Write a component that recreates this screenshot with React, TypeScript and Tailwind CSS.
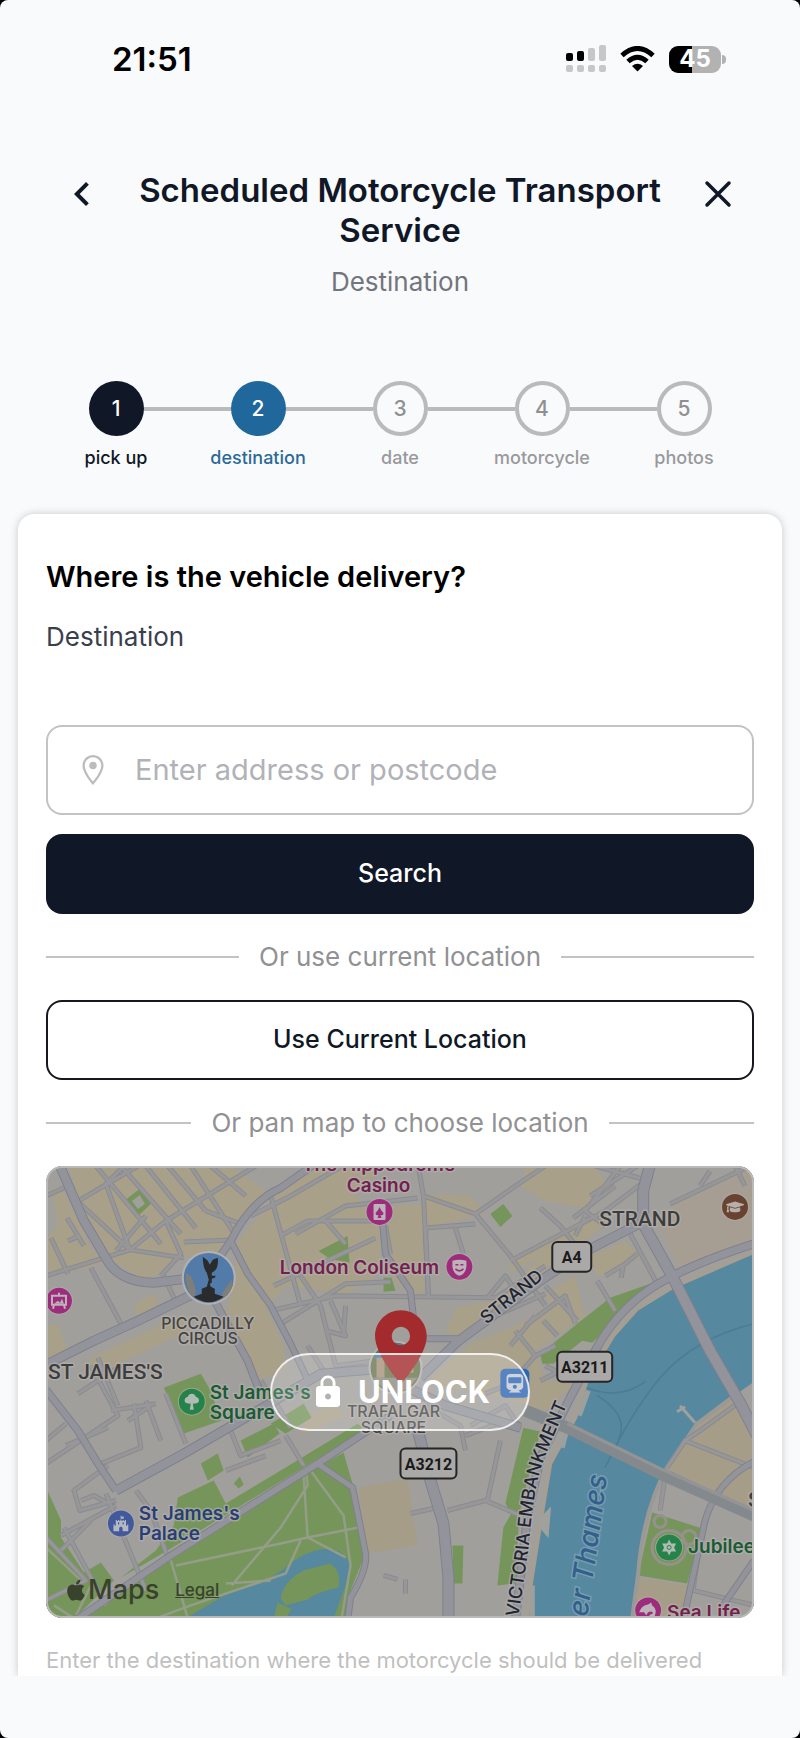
import { useState } from 'react';
import { FaApple, FaFortAwesome, FaGraduationCap, FaTrain } from 'react-icons/fa';

const steps = [
    { label: 'pick up', state: 'done' },
    { label: 'destination', state: 'current' },
    { label: 'date', state: 'todo' },
    { label: 'motorcycle', state: 'todo' },
    { label: 'photos', state: 'todo' },
];

const circleStyles: Record<string, string> = {
    done: 'bg-[#101726] text-white',
    current: 'bg-[#20689b] text-white',
    todo: 'border-4 border-[#bababb] text-[#8f9092]',
};

const labelStyles: Record<string, string> = {
    done: 'text-[#101726]',
    current: 'text-[#2b6a98]',
    todo: 'text-[#98999b]',
};

// Map geometry, in the units of the 709x453 view box
const beigeBlocks = [
    'M22 0L185 0L225 28L190 68L176 92L140 90L100 115L62 92L40 55Z',
    'M5 20L18 25L45 82L60 97L0 112L0 72L12 60Z',
    'M190 78L235 24L270 0L340 0L310 28L335 60L335 108L300 128L240 120L215 150L180 150L190 110Z',
    'M345 40L378 38L378 132L350 118L340 90Z',
    'M378 28L425 30L440 48L380 62Z',
    'M92 155L88 140L105 128L112 134L104 152Z',
    'M45 192L138 148L142 165L58 205L40 205Z',
    'M0 160L12 158L24 190L0 205Z',
    'M185 155L222 145L238 180L240 205L210 215Z',
    'M410 142L450 135L470 118L495 90L465 108L465 95L550 45L565 55L470 128L450 150L412 172L400 165Z',
    'M385 212L425 178L470 160L505 140L532 130L540 150L490 185L500 215L530 218L500 245L430 225L395 222Z',
    'M480 0L550 0L565 22L540 42L500 35L475 20Z',
    'M545 90L580 75L595 90L560 110L550 108Z',
    'M500 128L530 110L538 145L512 160Z',
    'M255 270L300 250L290 236L262 250Z',
];

const tanBlocks = [
    'M313 322L362 313L372 380L322 388Z',
    'M622 302L655 258L692 228L709 262L709 350L640 322Z',
    'M593 412L642 420L638 453L587 453Z',
];

const greenBlocks = [
    'M78 35L95 22L105 38L92 50Z',
    'M273 85L302 70L304 97L284 93Z',
    'M338 112L346 112L350 125L338 126Z',
    'M445 48L458 38L467 50L455 61Z',
    'M495 188L532 158L565 132L605 118L609 121L575 150L547 177L537 175L508 198L497 198Z',
    'M612 116L621 110L622 114L612 118Z',
    'M118 222L155 208L165 225L175 255L138 268Z',
    'M195 275L228 258L234 268L202 292Z',
    'M155 298L172 288L178 305L162 315Z',
    'M132 332L168 315L180 338L235 305L312 258L320 264L120 386L75 412L110 385L128 360Z',
    'M225 258L258 238L266 252L240 268Z',
    'M28 453L122 396L272 302L298 287L308 322L316 365L320 388L302 432L300 453Z',
    'M0 322L15 355L15 372L38 407L55 397L68 415L28 453L0 453Z',
    'M407 380L418 380L417 418L408 418Z',
    'M478 262L495 266L474 348L470 418L452 420L458 362L466 348L460 338Z',
    'M607 347L657 363L642 418L593 410Z',
];

const streets = [
    'M0 30L18 22M34 34L92 0M50 0L115 78M75 0L135 68M100 0L150 62M122 0L160 45M145 0L190 70M165 0L200 30',
    'M26 30L84 84L138 92M84 84L120 55L210 0M120 55L135 88L115 110M78 0L60 18L84 84L0 110M138 76L184 74',
    'M21 52L38 80M5 72L22 108M45 102L75 158M22 75L34 70M160 45L195 58M118 110L128 132M100 50L70 85',
    'M205 50L245 30L300 -2M225 30L255 140M250 68L300 40L372 32M280 55L300 78M235 70L262 55L330 55M228 120L330 72',
    'M372 -4L378 30L383 132M378 30L430 48L465 90L500 140M430 48L470 20L500 0M380 62L430 58M410 62L418 88',
    'M225 145L290 130L450 132L500 100M235 158L300 118L345 116M285 135L300 170L280 165M255 110L275 140L290 200L330 195',
    'M262 180L278 205M300 140L298 168M442 132L460 110L470 125M380 62L383 132M340 60L345 88M450 150L500 128',
    'M465 95L560 45L600 15M550 0L605 15M575 0L540 45L560 60M495 42L515 60L545 98M528 52L570 20M530 70L540 50',
    'M582 62L612 118M560 110L580 98L592 88M576 112L578 100M500 120L532 155M552 115L570 145M470 165L490 190L510 180',
    'M545 30L600 -5M625 38L709 -2M655 20L665 5M690 0L700 20M480 160L520 130L530 158M465 180L490 150M498 155L512 170',
    'M490 190L465 218M500 200L530 215M495 215L515 205M440 228L480 212M425 260L460 240L475 262M380 240L415 260L420 285',
    'M20 258L0 275M32 228L75 200M45 200L72 250L0 298M20 280L62 262M65 245L110 238M100 235L115 275M82 255L105 240',
    'M52 192L72 240M88 238L95 282L50 300M120 228L140 278M185 265L195 290L235 275M62 300L28 325L34 345L70 335',
    'M60 328L100 425M15 370L70 340M90 325L105 345L122 392M45 355L15 385M35 335L48 330L62 338M180 305L220 290',
    'M18 362L60 440M0 372L40 415L0 435M420 270L460 255L475 265M455 275L442 335M402 345L440 335L475 350M365 348L392 342',
    'M375 275L372 258M240 270L258 300M215 215L235 245L245 262M338 410L352 414M360 414L360 428',
    'M622 302L640 275L709 302M640 275L655 265L692 238M625 308L700 345M657 363L648 425L709 440M615 345L620 310',
];

const parkPaths =
    'M125 395L142 453M130 400L235 378L262 372L313 362M186 420L235 362L262 320L260 300M262 372L258 310M265 305L298 350L305 400L296 453M262 372L300 392M0 382L35 415M110 453L145 440L240 408L255 375M180 418L225 415M30 450L45 420M8 440L28 453';

const roads = [
    { d: 'M14 0L38 55L60 92Q72 116 108 117L140 113', width: 9 },
    { d: 'M0 199L48 175L92 155L150 127', width: 9 },
    { d: 'M168 100L185 75Q205 35 235 22L272 -4', width: 7 },
    { d: 'M185 75L202 108L225 140L245 178L262 214', width: 6 },
    { d: 'M167 132L202 195L214 226', width: 7 },
    { d: 'M0 224L32 265L52 298L70 325', width: 7 },
    { d: 'M70 325L138 288L200 252L275 208L325 204L400 240L475 262', width: 9 },
    { d: 'M28 456L122 392L272 298L345 250', width: 7 },
    { d: 'M272 298L307 322L313 352L320 388Q322 404 305 432L302 456', width: 6 },
    { d: 'M370 255L385 315L398 358L403 412L403 456', width: 11 },
    { d: 'M337 56L340 88L365 125L370 170', width: 6 },
    { d: 'M375 212L412 176L495 115L535 88L600 55', width: 9 },
    { d: 'M378 173L414 173', width: 6 },
    { d: 'M709 78Q640 100 605 123Q570 147 550 185L526 230L495 292L482 352L470 456', width: 8 },
    { d: 'M709 296Q672 315 660 355Q650 400 638 456', width: 6 },
    { d: 'M709 395L678 440', width: 6 },
    { d: 'M605 -2L598 25L598 58L628 112L665 185L695 237L712 270', width: 11 },
];

const halo = 'stroke-[#b3b0ac]/70 stroke-[3px] [paint-order:stroke] [stroke-linejoin:round]';

function Shield({ x, y, width, children }: { x: number; y: number; width: number; children: string }) {
    return (
        <g>
            <rect x={x} y={y} width={width} height={30} rx={5} fill="#aaa9a8" stroke="#252525" strokeWidth={2} />
            <text x={x + width / 2} y={y + 21} textAnchor="middle" className="font-['Roboto',sans-serif] text-[16px] font-bold fill-[#1b1b1b]">
                {children}
            </text>
        </g>
    );
}

function Poi({ x, y, fill, children }: { x: number; y: number; fill: string; children: React.ReactNode }) {
    return (
        <g transform={`translate(${x} ${y})`}>
            <circle r={14} fill="#b5b1ae" opacity={0.6} />
            <circle r={13} fill={fill} />
            {children}
        </g>
    );
}

function LondonMap() {
    return (
        <svg viewBox="0 0 709 453" className="block w-full font-['Inter',sans-serif]" role="img" aria-label="Map of Trafalgar Square, London">
            <rect width="709" height="453" fill="#a09f9c" />
            <path d="M612 55L630 38L709 0L709 72L636 108Z" fill="#a69e92" />
            {beigeBlocks.map(d => <path key={d} d={d} fill="#a9a08a" />)}
            {tanBlocks.map(d => <path key={d} d={d} fill="#a69d89" />)}
            {greenBlocks.map(d => <path key={d} d={d} fill="#76955a" />)}
            <path d="M86 35L94 29L99 38L92 43Z" fill="#a09f9c" />
            <path d="M188 318L194 311L198 319L193 323Z" fill="#76955a" />

            {/* St James's Park lake */}
            <path d="M140 453L182 428Q222 418 245 398Q262 384 285 383Q303 387 304 402L300 420L288 453Z" fill="#5688a0" />
            <path d="M235 433Q238 415 258 405L284 398Q296 404 293 422Q270 427 262 434L240 440ZM232 437L246 444L240 453L228 453Z" fill="#76955a" />

            {/* River Thames */}
            <path d="M709 86L665 105L628 121L592 143L568 170L542 213L530 252L505 298L495 358L485 422L482 453L587 453L593 408Q598 345 622 302L652 258L692 228L709 216Z" fill="#5688a0" />
            <path d="M709 86L665 105L628 121L592 143L568 170L542 213L530 252L505 298L495 358L485 422L482 453" fill="none" stroke="#a69e92" strokeWidth="4" />
            <path d="M587 453L593 408Q598 345 622 302L652 258L692 228" fill="none" stroke="#9a9995" strokeWidth="4" />
            <path d="M709 158Q650 172 615 212Q585 248 560 302M542 222Q575 235 600 216M552 230Q585 250 573 275" fill="none" stroke="#4c7c94" strokeWidth="1.5" />
            <path d="M543 225L534 250M522 262L517 282M487 420L487 453" stroke="#9ba09f" strokeWidth="5" />
            <path d="M492 357L504 345L502 369ZM635 240L650 257M632 246L640 241" fill="#a0a09d" stroke="#a0a09d" strokeWidth="3" />

            {streets.map(d => <path key={d} d={d} fill="none" stroke="#8a8b8f" strokeWidth="5" strokeLinejoin="round" />)}
            {streets.map(d => <path key={d} d={d} fill="none" stroke="#97979a" strokeWidth="3" strokeLinejoin="round" />)}
            <path d={parkPaths} fill="none" stroke="#939d87" strokeWidth="2.5" />
            {roads.map(r => <path key={r.d} d={r.d} fill="none" stroke="#7f818b" strokeWidth={r.width + 1} strokeLinejoin="round" />)}
            {roads.map(r => <path key={r.d} d={r.d} fill="none" stroke="#93949b" strokeWidth={r.width - 1} strokeLinejoin="round" />)}
            <path d="M480 245L522 262L615 308L709 350" fill="none" stroke="#83898c" strokeWidth="12" />
            <path d="M522 258L615 303L709 345" fill="none" stroke="#929496" strokeWidth="3" />
            <g fill="none" stroke="#96918f" strokeWidth="3">
                <circle cx="624" cy="382" r="17" />
                <circle cx="615" cy="356" r="6" />
                <circle cx="644" cy="372" r="7" />
            </g>

            {/* Piccadilly Circus photo */}
            <circle cx="163" cy="112" r="27" fill="#b3b2b3" />
            <circle cx="163" cy="112" r="25" fill="#537ba9" />
            <path d="M140 108Q146 106 150 126L148 132Q140 126 140 108ZM178 125L186 114L187 120Q183 132 174 134Z" fill="#807e78" />
            <path d="M157 91L162 95L164 99L167 94L172 92Q173 101 169 105L166 107L166 110L170 110L169 112L166 113L166 117L164 118L165 121L169 123L169 128L178 131Q163 142 148 131L156 128L156 123L161 121L163 114L161 107Q157 102 157 91Z" fill="#292b2d" />

            {/* Trafalgar Square photo */}
            <circle cx="350" cy="202" r="27" fill="#b3b2b3" />
            <circle cx="350" cy="202" r="25" fill="#68764e" />
            <path d="M328 192Q350 162 372 192L364 197L338 197Z" fill="#447ead" />
            <path d="M331 192h8v20h-8zM362 197h6v10h-6z" fill="#a59078" />
            <path d="M328 212H372Q350 242 328 212Z" fill="#8d8b80" />

            <Poi x={334} y={46} fill="#9d2d7c">
                <rect x="-6" y="-8" width="12" height="16" rx="1" fill="#bdb4ba" />
                <path d="M0 -5Q1 -2 4 1Q4 4 1 3L2 6H-2L-1 3Q-4 4 -4 1Q-1 -2 0 -5Z" fill="#9d2d7c" />
            </Poi>
            <Poi x={414} y={101} fill="#9d2d7c">
                <path d="M-7 -6Q0 -8 7 -6V0Q6 7 0 9Q-6 7 -7 0Z" fill="#bdb4ba" />
                <path d="M-4 -2h3M1 -2h3M-4 2Q0 6 4 2" fill="none" stroke="#9d2d7c" strokeWidth="1.5" />
            </Poi>
            <Poi x={13} y={135} fill="#9d2d7c">
                <path d="M-7 -5H7V4H-7ZM-5 4L-6 8M5 4L6 8M0 -8V-5" fill="none" stroke="#bdb4ba" strokeWidth="2" />
                <path d="M-5 3L-1 0L1 2L3 -2L5 3Z" fill="#bdb4ba" />
            </Poi>
            <Poi x={690} y={41} fill="#694331"><FaGraduationCap x={-9} y={-9} size={18} color="#b7b0aa" /></Poi>
            <Poi x={146} y={236} fill="#24824a">
                <path d="M-7 0Q-8 -4 -4 -5Q-3 -8 0 -8Q3 -8 4 -5Q8 -4 7 0Q6 2 1 2L2 8H-2L-1 2Q-6 2 -7 0Z" fill="#b0bbb2" />
            </Poi>
            <Poi x={75} y={358} fill="#43599e"><FaFortAwesome x={-8} y={-8} size={16} color="#b4b8c0" /></Poi>
            <Poi x={624} y={382} fill="#24824a">
                <path d="M0 -8L2 -4L7 -4L5 0L7 4L2 4L0 8L-2 4L-7 4L-5 0L-7 -4L-2 -4Z" fill="#b0bbb2" />
                <circle r="2" fill="none" stroke="#24824a" />
            </Poi>
            <Poi x={603} y={445} fill="#9d2d7c">
                <path d="M-9 2Q-7 -5 0 -6L3 -8L4 -5Q10 -1 6 7L4 9L1 5L5 3Q4 0 0 2L-2 5L-4 2Z" fill="#bdb4ba" />
            </Poi>
            <rect x="455" y="203" width="29" height="29" rx="5" fill="#2f65b3" />
            <FaTrain x={460} y={208} size={19} color="#c2cad4" />

            <g className={`text-[19px] font-semibold fill-[#74204f] ${halo}`}>
                <text x="333" y="5" textAnchor="middle">The Hippodrome</text>
                <text x="333" y="26" textAnchor="middle">Casino</text>
                <text x="234" y="108">London Coliseum</text>
                <text x="622" y="454">Sea Life</text>
            </g>
            <g className={`text-[19px] font-semibold fill-[#195b35] ${halo}`}>
                <text x="164" y="233">St James's</text>
                <text x="164" y="253">Square</text>
                <text x="643" y="388">Jubilee</text>
            </g>
            <g className={`text-[19px] font-semibold fill-[#293d77] ${halo}`}>
                <text x="93" y="355">St James's</text>
                <text x="93" y="375">Palace</text>
            </g>
            <g className={`text-[16px] font-medium fill-[#44433f] ${halo}`} textAnchor="middle">
                <text x="162" y="163">PICCADILLY</text>
                <text x="162" y="178">CIRCUS</text>
                <text x="348" y="251">TRAFALGAR</text>
                <text x="348" y="267">SQUARE</text>
            </g>
            <g className={`font-['Roboto',sans-serif] text-[21px] font-medium fill-[#3d3d3e] ${halo}`}>
                <text x="2" y="213">ST JAMES'S</text>
                <text x="554" y="60">STRAND</text>
                <text x="703" y="341">S</text>
            </g>
            <g className={`text-[18px] font-medium fill-[#202433] ${halo}`}>
                <text transform="translate(441 159) rotate(-39)">STRAND</text>
                <path id="embankment" d="M473 452L483 385Q488 320 500 290L523 236" fill="none" stroke="none" />
                <text><textPath href="#embankment">VICTORIA EMBANKMENT</textPath></text>
            </g>
            <text transform="translate(562 310) rotate(-82)" textAnchor="end" className="text-[28px] font-medium italic fill-[#335f8c] stroke-[#88a7b5]/70 stroke-[3px] [paint-order:stroke]">
                er Thames
            </text>

            <Shield x={507} y={76} width={39}>A4</Shield>
            <Shield x={512} y={186} width={55}>A3211</Shield>
            <Shield x={355} y={283} width={56}>A3212</Shield>

            <path transform="translate(311 137) scale(3.7)" fill="#a32a2d" d="M12 2C8.13 2 5 5.13 5 9c0 5.25 7 13 7 13s7-7.75 7-13c0-3.87-3.13-7-7-7zm0 9.5a2.5 2.5 0 0 1 0-5 2.5 2.5 0 0 1 0 5z" />
        </svg>
    );
}

function StatusBar() {
    return (
        <div className="flex h-[118px] items-center justify-between pl-28 pr-[74px] text-black">
            <span className="text-[33px] font-semibold leading-10">21:51</span>
            <div className="flex items-center gap-[14px]">
                <svg width="40" height="28" viewBox="0 0 40 28" aria-hidden="true">
                    <g fill="#000">
                        <rect y="8" width="7" height="8" rx="2" />
                        <rect x="11" y="6" width="7" height="10" rx="2" />
                    </g>
                    <g fill="#c6c7c9">
                        <rect x="22" y="3" width="7" height="13" rx="2" />
                        <rect x="33" y="0" width="7" height="16" rx="2" />
                        <rect y="20" width="7" height="7" rx="2" />
                        <rect x="11" y="20" width="7" height="7" rx="2" />
                        <rect x="22" y="20" width="7" height="7" rx="2" />
                        <rect x="33" y="20" width="7" height="7" rx="2" />
                    </g>
                </svg>
                <svg width="35" height="26" viewBox="0 0 35 26" fill="none" stroke="#000" strokeWidth="5" aria-hidden="true">
                    <path d="M2 9.5Q17.5-4.5 33 9.5" />
                    <path d="M8 15.5Q17.5 7 27 15.5" />
                    <path d="M12 20Q17.5 15.5 23 20L17.5 25.5Z" fill="#000" stroke="none" />
                </svg>
                <div className="flex items-center gap-px">
                    <div className="flex h-[27px] w-[52px] items-center justify-center rounded-[9px] bg-[linear-gradient(90deg,#000_45%,#b2b2b3_45%)] text-[24px] font-bold leading-none text-white">
                        45
                    </div>
                    <div className="h-[9px] w-1 rounded-r-full bg-[#b2b2b3]" />
                </div>
            </div>
        </div>
    );
}

function Divider({ children }: { children: string }) {
    return (
        <div className="my-[27px] flex items-center gap-5 text-[26px] leading-8 text-[#919193]">
            <span className="h-0.5 flex-1 bg-[#c3c3c4]" />
            {children}
            <span className="h-0.5 flex-1 bg-[#c3c3c4]" />
        </div>
    );
}

export default function App() {
    const [address, setAddress] = useState('');
    const [locked, setLocked] = useState(true);

    return (
        <div className="min-h-screen bg-black">
            <div className="flex min-h-screen flex-col rounded-lg bg-[#f9fafc] pb-[62px] font-['Inter',sans-serif]">
                <StatusBar />

                <header className="mt-[52px] flex items-start px-[58px] text-[#101726]">
                    <button type="button" aria-label="Back" className="size-12">
                        <svg viewBox="0 0 24 24" fill="currentColor"><path d="M15.41 7.41 14 6l-6 6 6 6 1.41-1.41L10.83 12z" /></svg>
                    </button>
                    <div className="flex-1 text-center">
                        <h1 className="text-[33px] font-semibold leading-10">Scheduled Motorcycle Transport Service</h1>
                        <p className="mt-4 text-[26px] leading-8 text-[#73757d]">Destination</p>
                    </div>
                    <button type="button" aria-label="Close" className="size-12">
                        <svg viewBox="0 0 48 48" fill="none" stroke="currentColor" strokeWidth="3.5" strokeLinecap="round"><path d="M13 13L35 35M35 13L13 35" /></svg>
                    </button>
                </header>

                <ol className="mt-[83px] grid grid-cols-5 px-[45px]">
                    {steps.map((step, i) => (
                        <li key={step.label} className="text-center">
                            <div className="flex items-center">
                                <span className={`h-1 flex-1 ${i > 0 ? 'bg-[#bababb]' : ''}`} />
                                <span className={`flex size-[55px] items-center justify-center rounded-full text-[21px] font-medium ${circleStyles[step.state]}`}>{i + 1}</span>
                                <span className={`h-1 flex-1 ${i < steps.length - 1 ? 'bg-[#bababb]' : ''}`} />
                            </div>
                            <p className={`mt-[10px] text-[18px] font-medium leading-6 ${labelStyles[step.state]}`}>{step.label}</p>
                        </li>
                    ))}
                </ol>

                <main className="mt-9 flex flex-1 flex-col overflow-hidden px-[18px] pt-2">
                    <form className="flex-1 rounded-t-2xl bg-white px-7 pt-[45px] shadow-[0_0_8px_rgba(0,0,0,0.2)]" onSubmit={e => e.preventDefault()}>
                        <h2 className="text-[29px] font-semibold leading-9 text-black">Where is the vehicle delivery?</h2>
                        <label htmlFor="address" className="mt-[26px] block text-[26px] leading-8 text-[#3a3f4e]">Destination</label>

                        <div className="mt-[72px] flex h-[90px] items-center gap-6 rounded-2xl border-2 border-[#c3c3c4] pl-[27px] pr-6">
                            <svg viewBox="0 0 24 24" className="size-9 shrink-0 text-[#bcbcbd]" fill="currentColor" aria-hidden="true">
                                <path d="M12 2C8.13 2 5 5.13 5 9c0 5.25 7 13 7 13s7-7.75 7-13c0-3.87-3.13-7-7-7zM6.5 9c0-3 2.5-5.5 5.500-5.500s5.500 2.500 5.500 5.500c0 3-2.900 7.700-5.500 10.600C9.400 16.700 6.500 12 6.500 9z" />
                                <circle cx="12" cy="9" r="2.5" />
                            </svg>
                            <input id="address" type="text" value={address} onChange={e => setAddress(e.target.value)} placeholder="Enter address or postcode"
                                className="min-w-0 flex-1 text-[29px] text-[#101726] outline-none placeholder:text-[#b1b2b8]" />
                        </div>
                        <button type="submit" className="mt-[19px] h-20 w-full rounded-2xl bg-[#101726] text-[25px] font-medium text-white">Search</button>

                        <Divider>Or use current location</Divider>
                        <button type="button" className="h-20 w-full rounded-2xl border-2 border-[#16181f] text-[25px] font-medium text-[#101726]">Use Current Location</button>
                        <Divider>Or pan map to choose location</Divider>

                        <div className="relative overflow-hidden rounded-2xl">
                            <LondonMap />
                            <div className="absolute bottom-3 left-[18px] flex items-center gap-4 text-[#38422c]">
                                <span className="flex items-center text-[27px] font-medium leading-8"><FaApple className="size-6" />Maps</span>
                                <a href="#legal" className="text-[17px] font-medium leading-6 underline">Legal</a>
                            </div>
                            <div className="pointer-events-none absolute inset-0 rounded-2xl border-2 border-[#b9b9b8]" />
                            {locked && (
                                <button type="button" onClick={() => setLocked(false)}
                                    className="absolute left-1/2 top-1/2 flex h-[78px] w-[260px] -translate-x-1/2 -translate-y-1/2 items-center justify-center gap-3 rounded-full border-2 border-white/80 bg-white/20 text-[31px] font-bold text-white">
                                    <svg viewBox="0 0 24 24" className="size-9" fill="currentColor" aria-hidden="true">
                                        <path d="M18 8h-1V6c0-2.76-2.24-5-5-5S7 3.24 7 6v2H6c-1.1 0-2 .9-2 2v10c0 1.1.9 2 2 2h12c1.1 0 2-.9 2-2V10c0-1.1-.9-2-2-2zm-6 9c-1.1 0-2-.9-2-2s.9-2 2-2 2 .9 2 2-.9 2-2 2zm3.1-9H8.9V6c0-1.71 1.39-3.1 3.1-3.1s3.1 1.39 3.1 3.1v2z" />
                                    </svg>
                                    UNLOCK
                                </button>
                            )}
                        </div>
                        <p className="mt-[26px] text-[22px] leading-8 text-[#bfbfc0]">Enter the destination where the motorcycle should be delivered</p>
                    </form>
                </main>
            </div>
        </div>
    );
}
